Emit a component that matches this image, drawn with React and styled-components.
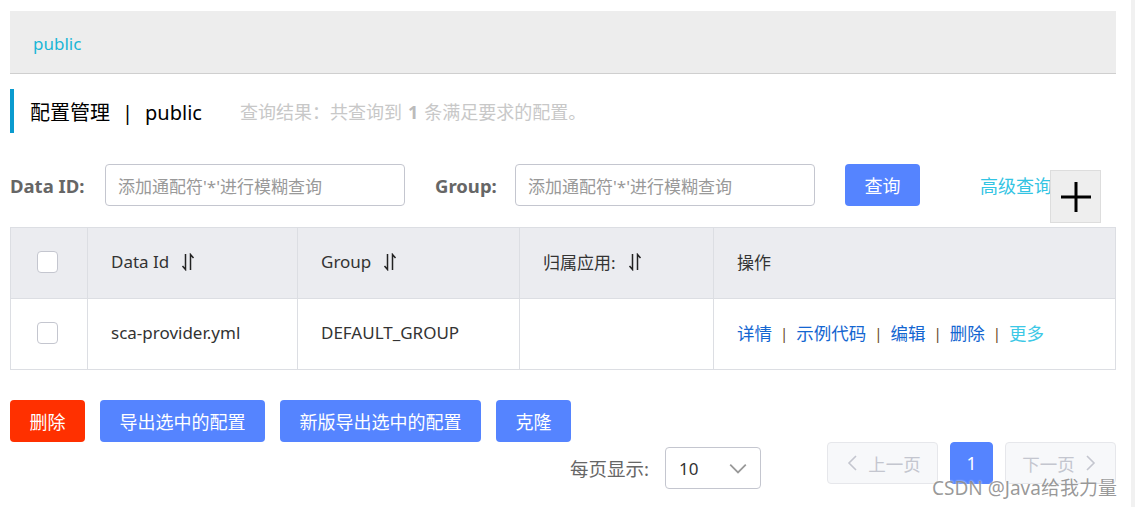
import React from "react";
import styled, { createGlobalStyle } from "styled-components";

const Global = createGlobalStyle`
  html, body { margin: 0; padding: 0; background: #fff; }
  body { font-family: "Noto Sans", "Noto Sans CJK SC", sans-serif; color: #333; }
  * { box-sizing: border-box; }
`;

const Page = styled.div`
  display: flex;
  width: 1135px;
  height: 507px;
  overflow: hidden;
  position: relative;
`;

const Main = styled.div`
  flex: 1;
  padding: 11px 15px 0 10px;
  display: flex;
  flex-direction: column;
`;

const ScrollStrip = styled.div`
  width: 4px;
  background: #f1f1f1;
`;

const NsBar = styled.div`
  height: 63px;
  background: #ededed;
  border-bottom: 1px solid #cfcfcf;
  display: flex;
  align-items: center;
  padding-left: 23px;
  padding-top: 2px;
`;

const NsLink = styled.span`
  color: #1ab6d6;
  font-size: 17px;
`;

const TitleRow = styled.div`
  margin-top: 15px;
  height: 44px;
  border-left: 4px solid #0a9bcf;
  display: flex;
  align-items: center;
  padding-left: 16px;
`;

const Title = styled.span`
  font-size: 20px;
  color: #000;
`;

const Sep = styled.span`
  margin: 0 12px;
`;

const Result = styled.span`
  margin-left: 38px;
  font-size: 18px;
  color: #c8c8c8;
  b { color: #bbb; font-weight: 700; margin: 0 6px; }
`;

const SearchRow = styled.div`
  margin-top: 31px;
  display: flex;
  align-items: center;
  height: 42px;
  position: relative;
`;

const Label = styled.span`
  font-weight: 700;
  font-size: 18.5px;
  color: #666;
  width: ${p => p.$w}px;
  margin-left: ${p => p.$lead || 0}px;
  white-space: nowrap;
`;

const Input = styled.div`
  width: 300px;
  height: 42px;
  border: 1px solid #c4c6cf;
  border-radius: 4px;
  display: flex;
  align-items: center;
  padding-left: 12px;
  font-size: 17px;
  color: #999;
  white-space: nowrap;
`;

const Btn = styled.button`
  height: 42px;
  border: none;
  border-radius: 4px;
  background: ${p => (p.$danger ? "#ff3000" : "#5584ff")};
  color: #fff;
  font-family: inherit;
  font-size: 18px;
  padding: 0 19.5px;
  margin-left: ${p => p.$ml || 0}px;
  cursor: pointer;
  white-space: nowrap;
`;

const AdvLink = styled.span`
  margin-left: 60px;
  color: #33c4e3;
  font-size: 18px;
  white-space: nowrap;
`;

const PlusBox = styled.div`
  position: absolute;
  left: 1040px;
  top: 6px;
  width: 51px;
  height: 53px;
  background: #eee;
  border: 1px solid #ddd;
  display: flex;
  align-items: center;
  justify-content: center;
`;

const Table = styled.div`
  margin-top: 21px;
  display: grid;
  grid-template-columns: 76px 210px 222px 194px 1fr;
  border: 1px solid #dcdee3;
`;

const Cell = styled.div`
  height: ${p => (p.$head ? 70 : 71)}px;
  background: ${p => (p.$head ? "#ebecf0" : "#fff")};
  border-left: ${p => (p.$first ? "none" : "1px solid #dcdee3")};
  border-top: ${p => (p.$head ? "none" : "1px solid #dcdee3")};
  display: flex;
  align-items: center;
  justify-content: ${p => (p.$center ? "center" : "flex-start")};
  padding-left: ${p => (p.$center ? 0 : 23)}px;
  padding-right: ${p => (p.$center ? 3 : 0)}px;
  padding-bottom: 3px;
  font-size: 17px;
  color: #333;
`;

const Check = styled.span`
  width: 21px;
  height: 22px;
  border: 1px solid #c4c6cf;
  border-radius: 4px;
  background: #fff;
`;

const SortIcon = styled.svg`
  margin-left: 12px;
  margin-top: 1px;
`;

const Actions = styled.div`
  display: flex;
  align-items: center;
  font-size: 17.5px;
`;

const ActLink = styled.span`
  color: ${p => (p.$more ? "#3cc8e6" : "#1466d1")};
`;

const Bar = styled.span`
  color: #6b4a2a;
  margin: 0 8px;
  font-size: 15px;
`;

const BtnRow = styled.div`
  margin-top: 30px;
  display: flex;
  gap: 15px;
`;

const PagerRow = styled.div`
  display: flex;
  justify-content: flex-end;
  align-items: flex-start;
`;

const SizeLabel = styled.span`
  margin-top: 13px;
  font-size: 18.5px;
  color: #666;
  margin-right: 16px;
`;

const Select = styled.div`
  margin-top: 5px;
  width: 96px;
  height: 42px;
  border: 1px solid #c4c6cf;
  border-radius: 4px;
  display: flex;
  align-items: center;
  justify-content: space-between;
  padding: 0 12px 0 13px;
  font-size: 17px;
  color: #333;
  margin-right: 66px;
`;

const PageBtn = styled.div`
  height: 42px;
  width: ${p => p.$w}px;
  border-radius: 4px;
  border: 1px solid ${p => (p.$active ? "#5584ff" : "#e6e7eb")};
  background: ${p => (p.$active ? "#5584ff" : "#f7f8fa")};
  color: ${p => (p.$active ? "#fff" : "#c4c6cf")};
  display: flex;
  align-items: center;
  justify-content: center;
  gap: 6px;
  font-size: 17.5px;
  margin-left: ${p => p.$ml || 0}px;
`;

const Watermark = styled.div`
  position: absolute;
  left: 932px;
  top: 473px;
  font-size: 19px;
  color: rgba(120, 120, 120, 0.75);
  text-shadow: 0 0 2px #fff;
  white-space: nowrap;
`;

const Sort = () => (
  <SortIcon width="14" height="18" viewBox="0 0 14 18" fill="none" stroke="#222" strokeWidth="1.5">
    <path d="M4.5 1v15.5L1.5 13" />
    <path d="M9.5 17V1.5L12.5 5" />
  </SortIcon>
);

const Chevron = ({ dir = "down", color = "#999", size = 18 }) => {
  const d =
    dir === "down"
      ? "M2 6l7 7 7-7"
      : dir === "left"
      ? "M12 2L5 9l7 7"
      : "M6 2l7 7-7 7";
  return (
    <svg width={size} height={size} viewBox="0 0 18 18" fill="none" stroke={color} strokeWidth="1.6">
      <path d={d} />
    </svg>
  );
};

export default function App() {
  return (
    <Page>
      <Global />
      <Main>
        <NsBar>
          <NsLink>public</NsLink>
        </NsBar>
        <TitleRow>
          <Title>
            配置管理<Sep>|</Sep>public
          </Title>
          <Result>
            查询结果：共查询到<b>1</b>条满足要求的配置。
          </Result>
        </TitleRow>
        <SearchRow>
          <Label $w={95}>Data ID:</Label>
          <Input>添加通配符'*'进行模糊查询</Input>
          <Label $w={80} $lead={30}>Group:</Label>
          <Input>添加通配符'*'进行模糊查询</Input>
          <Btn $ml={30}>查询</Btn>
          <AdvLink>高级查询</AdvLink>
          <PlusBox>
            <svg width="32" height="32" viewBox="0 0 32 32">
              <path d="M16 1v30M1 16h30" stroke="#000" strokeWidth="3" />
            </svg>
          </PlusBox>
        </SearchRow>
        <Table>
          <Cell $head $first $center><Check /></Cell>
          <Cell $head>Data Id<Sort /></Cell>
          <Cell $head>Group<Sort /></Cell>
          <Cell $head>归属应用:<Sort /></Cell>
          <Cell $head>操作</Cell>

          <Cell $first $center><Check /></Cell>
          <Cell>sca-provider.yml</Cell>
          <Cell>DEFAULT_GROUP</Cell>
          <Cell></Cell>
          <Cell>
            <Actions>
              <ActLink>详情</ActLink>
              <Bar>|</Bar>
              <ActLink>示例代码</ActLink>
              <Bar>|</Bar>
              <ActLink>编辑</ActLink>
              <Bar>|</Bar>
              <ActLink>删除</ActLink>
              <Bar>|</Bar>
              <ActLink $more>更多</ActLink>
            </Actions>
          </Cell>
        </Table>
        <BtnRow>
          <Btn $danger>删除</Btn>
          <Btn>导出选中的配置</Btn>
          <Btn>新版导出选中的配置</Btn>
          <Btn>克隆</Btn>
        </BtnRow>
        <PagerRow>
          <SizeLabel>每页显示:</SizeLabel>
          <Select>
            10
            <Chevron dir="down" color="#999" size={20} />
          </Select>
          <PageBtn $w={111}>
            <Chevron dir="left" color="#c4c6cf" />
            上一页
          </PageBtn>
          <PageBtn $w={43} $active $ml={12}>1</PageBtn>
          <PageBtn $w={111} $ml={12}>
            下一页
            <Chevron dir="right" color="#c4c6cf" />
          </PageBtn>
        </PagerRow>
      </Main>
      <ScrollStrip />
      <Watermark>CSDN @Java给我力量</Watermark>
    </Page>
  );
}
